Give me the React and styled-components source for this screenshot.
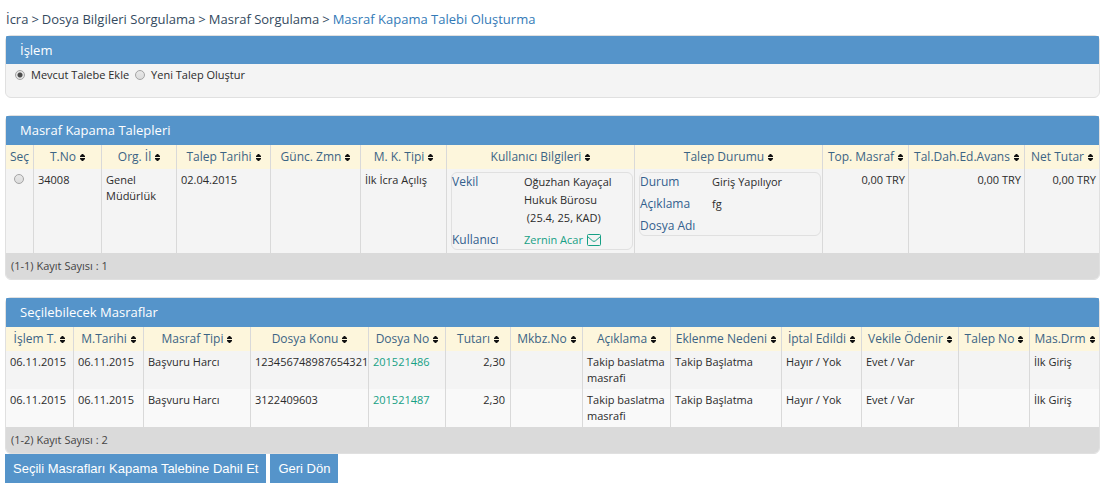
import React, { useState } from 'react';
import styled, { createGlobalStyle } from 'styled-components';

const GlobalStyle = createGlobalStyle`
    * {
        box-sizing: border-box;
    }

    body {
        margin: 0;
        background-color: #fff;
        color: #2b2b2b;
        font-family: 'Open Sans', 'Noto Sans', sans-serif;
        font-size: 11px;
        line-height: 16px;
    }
`;

const Page = styled.main`
    padding: 8px 6px 4px 5px;
`;

const Breadcrumb = styled.nav`
    display: flex;
    flex-wrap: wrap;
    gap: 3px;
    padding: 0 1px;
    margin-bottom: 5px;
    font-size: 13px;
    line-height: 22px;
    color: #34495e;
`;

const Crumb = styled.a`
    color: ${props => (props.$active ? '#337ab7' : '#34495e')};
    text-decoration: none;
`;

const Panel = styled.section`
    border: 1px solid #e0e0e0;
    border-radius: 6px;
    background-color: #f4f4f4;
    margin-bottom: ${props => (props.$last ? '0' : '17px')};
`;

const PanelTitle = styled.h2`
    margin: 0;
    padding: 0 14px;
    border-radius: 1px 1px 0 0;
    background-color: #5594ca;
    color: #fff;
    font-size: 13px;
    font-weight: 500;
    line-height: ${props => (props.$compact ? '28px' : '29px')};
`;

const RadioGroup = styled.div`
    display: flex;
    gap: 6px;
    padding: 3px 9px 14px;
`;

const RadioLabel = styled.label`
    display: flex;
    align-items: center;
    gap: 6px;
`;

const Radio = styled.input`
    appearance: none;
    flex: none;
    width: 10px;
    height: 10px;
    margin: 0;
    border: 1px solid #a4a4a4;
    border-radius: 50%;
    background-image: linear-gradient(#e8e8e8, #dcdcdc);

    &:checked {
        background-image: radial-gradient(circle, #4a4a4a 2px, #e4e4e4 3px);
    }
`;

const Table = styled.table`
    width: 100%;
    table-layout: fixed;
    border-collapse: separate;
    border-spacing: 0;
`;

const Col = styled.col`
    width: ${props => props.$width}px;
`;

const Th = styled.th`
    height: 24px;
    padding: 0;
    background-color: #fdf6dc;
    border-right: 1px solid #d9d9d9;
    color: #3c6484;
    font-size: 12px;
    font-weight: 400;
    text-align: center;
    white-space: nowrap;

    &:last-child {
        border-right: none;
    }
`;

const SortIcon = styled.svg`
    width: 5px;
    height: 7px;
    margin-left: 4px;
`;

const Row = styled.tr`
    background-color: ${props => (props.$light ? '#f9f9f9' : '#f4f4f4')};
`;

const Td = styled.td`
    padding: 3px 1px 3px 4px;
    border-right: 1px solid #d9d9d9;
    vertical-align: top;
    text-align: ${props => props.$align || 'left'};

    &:last-child {
        border-right: none;
    }
`;

const SelectCell = styled(Td)`
    padding: 5px 1px 0 0;
    text-align: center;
    line-height: 10px;
`;

const Amount = styled.span`
    padding-right: ${props => (props.$wide ? '4px' : '2px')};
`;

const TableFooter = styled.div`
    padding: 0 5px;
    border-radius: 0 0 5px 5px;
    background-color: #dadada;
    color: #444;
    line-height: 26px;
`;

const DetailList = styled.dl`
    display: grid;
    grid-template-columns: 72px 1fr;
    row-gap: 4px;
    margin: 0;
    border: 1px solid #e0e0e0;
    border-radius: 6px;
    line-height: 18px;
`;

const Term = styled.dt`
    color: #335f8e;
    font-size: 12px;
`;

const Detail = styled.dd`
    margin: 0;
`;

const GreenLink = styled.a`
    color: #16a085;
    text-decoration: none;
`;

const MailIcon = styled.svg`
    width: 14px;
    height: 12px;
    margin-left: 4px;
    vertical-align: -2px;
`;

const Actions = styled.div`
    display: flex;
    gap: 4px;
`;

const Button = styled.button`
    height: 29px;
    padding: 0 8px;
    border: none;
    background-color: #5594ca;
    color: #fff;
    font-family: 'Liberation Sans', Arial, sans-serif;
    font-size: 13px;
`;

const requestColumns = [
    { title: 'Seç', width: 28, plain: true },
    { title: 'T.No', width: 68 },
    { title: 'Org. İl', width: 75 },
    { title: 'Talep Tarihi', width: 94 },
    { title: 'Günc. Zmn', width: 90 },
    { title: 'M. K. Tipi', width: 86 },
    { title: 'Kullanıcı Bilgileri', width: 188 },
    { title: 'Talep Durumu', width: 188 },
    { title: 'Top. Masraf', width: 86 },
    { title: 'Tal.Dah.Ed.Avans', width: 116 },
    { title: 'Net Tutar', width: 74 },
];

const expenseColumns = [
    { title: 'İşlem T.', width: 68 },
    { title: 'M.Tarihi', width: 70 },
    { title: 'Masraf Tipi', width: 107 },
    { title: 'Dosya Konu', width: 118 },
    { title: 'Dosya No', width: 77 },
    { title: 'Tutarı', width: 65 },
    { title: 'Mkbz.No', width: 72 },
    { title: 'Açıklama', width: 88 },
    { title: 'Eklenme Nedeni', width: 111 },
    { title: 'İptal Edildi', width: 80 },
    { title: 'Vekile Ödenir', width: 97 },
    { title: 'Talep No', width: 71 },
    { title: 'Mas.Drm', width: 69 },
];

const expenses = [
    { subject: '123456748987654321', fileNo: '201521486' },
    { subject: '3122409603', fileNo: '201521487' },
];

const TableHead = ({ columns }) => (
    <>
        <colgroup>
            {columns.map(column => <Col key={column.title} $width={column.width} />)}
        </colgroup>
        <thead>
            <tr>
                {columns.map(column => (
                    <Th key={column.title} scope="col">
                        {column.title}
                        {!column.plain && (
                            <SortIcon viewBox="0 0 5 7" aria-hidden="true">
                                <path d="M2 0h1l2 2v1H0V2zM0 4h5v1L3 7H2L0 5z" fill="#111" />
                            </SortIcon>
                        )}
                    </Th>
                ))}
            </tr>
        </thead>
    </>
);

const App = () => {
    const [mode, setMode] = useState('existing');

    return (
        <Page>
            <GlobalStyle />

            <Breadcrumb>
                <Crumb href="#icra">İcra</Crumb>
                <span>&gt;</span>
                <Crumb href="#dosya">Dosya Bilgileri Sorgulama</Crumb>
                <span>&gt;</span>
                <Crumb href="#masraf">Masraf Sorgulama</Crumb>
                <span>&gt;</span>
                <Crumb href="#talep" $active>Masraf Kapama Talebi Oluşturma</Crumb>
            </Breadcrumb>

            <Panel>
                <PanelTitle $compact>İşlem</PanelTitle>
                <RadioGroup>
                    <RadioLabel>
                        <Radio type="radio" name="mode" checked={mode === 'existing'} onChange={() => setMode('existing')} />
                        Mevcut Talebe Ekle
                    </RadioLabel>
                    <RadioLabel>
                        <Radio type="radio" name="mode" checked={mode === 'new'} onChange={() => setMode('new')} />
                        Yeni Talep Oluştur
                    </RadioLabel>
                </RadioGroup>
            </Panel>

            <Panel>
                <PanelTitle>Masraf Kapama Talepleri</PanelTitle>
                <Table>
                    <TableHead columns={requestColumns} />
                    <tbody>
                        <Row>
                            <SelectCell>
                                <Radio type="radio" name="request" aria-label="34008" />
                            </SelectCell>
                            <Td>34008</Td>
                            <Td>Genel Müdürlük</Td>
                            <Td>02.04.2015</Td>
                            <Td />
                            <Td>İlk İcra Açılış</Td>
                            <Td>
                                <DetailList>
                                    <Term>Vekil</Term>
                                    <Detail>
                                        Oğuzhan Kayaçal<br />
                                        Hukuk Bürosu<br />
                                        {'\u00a0'}(25.4, 25, KAD)
                                    </Detail>
                                    <Term>Kullanıcı</Term>
                                    <Detail>
                                        <GreenLink href="#zernin-acar">
                                            Zernin Acar
                                            <MailIcon viewBox="0 0 14 12" fill="none" stroke="currentColor" aria-hidden="true">
                                                <rect x="0.5" y="0.5" width="13" height="11" rx="1" />
                                                <path d="M0.5 2.5 5.5 6.8Q7 8 8.5 6.8L13.5 2.5" />
                                            </MailIcon>
                                        </GreenLink>
                                    </Detail>
                                </DetailList>
                            </Td>
                            <Td>
                                <DetailList>
                                    <Term>Durum</Term>
                                    <Detail>Giriş Yapılıyor</Detail>
                                    <Term>Açıklama</Term>
                                    <Detail>fg</Detail>
                                    <Term>Dosya Adı</Term>
                                    <Detail />
                                </DetailList>
                            </Td>
                            <Td $align="right"><Amount>0,00 TRY</Amount></Td>
                            <Td $align="right"><Amount>0,00 TRY</Amount></Td>
                            <Td $align="right"><Amount>0,00 TRY</Amount></Td>
                        </Row>
                    </tbody>
                </Table>
                <TableFooter>(1-1) Kayıt Sayısı : 1</TableFooter>
            </Panel>

            <Panel $last>
                <PanelTitle>Seçilebilecek Masraflar</PanelTitle>
                <Table>
                    <TableHead columns={expenseColumns} />
                    <tbody>
                        {expenses.map((expense, index) => (
                            <Row key={expense.fileNo} $light={index % 2 === 1}>
                                <Td>06.11.2015</Td>
                                <Td>06.11.2015</Td>
                                <Td>Başvuru Harcı</Td>
                                <Td>{expense.subject}</Td>
                                <Td><GreenLink href={`#${expense.fileNo}`}>{expense.fileNo}</GreenLink></Td>
                                <Td $align="right"><Amount $wide>2,30</Amount></Td>
                                <Td />
                                <Td>Takip baslatma masrafi</Td>
                                <Td>Takip Başlatma</Td>
                                <Td>Hayır / Yok</Td>
                                <Td>Evet / Var</Td>
                                <Td />
                                <Td>İlk Giriş</Td>
                            </Row>
                        ))}
                    </tbody>
                </Table>
                <TableFooter>(1-2) Kayıt Sayısı : 2</TableFooter>
            </Panel>

            <Actions>
                <Button type="button">Seçili Masrafları Kapama Talebine Dahil Et</Button>
                <Button type="button">Geri Dön</Button>
            </Actions>
        </Page>
    );
};

export default App;
